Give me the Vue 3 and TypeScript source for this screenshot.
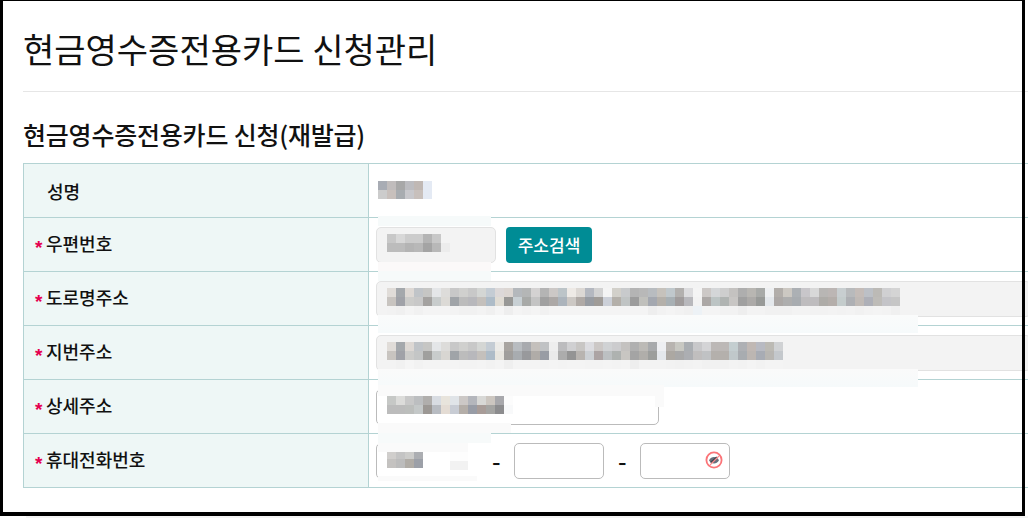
<script setup lang="ts">
type Mos = string[][];
const parse = (rows: string[]): Mos => rows.map((r) => r.split(" "));
const color = (c: string): string => (c.length === 2 ? `#${c}${c}${c}` : `#${c}`);

const nameMos = parse([
  "a8acb4 c0bcbc a8a8a8 bcbcc0 c0b8b4 e4eaf4",
  "cccccc c8c0bc a8acb0 c8c8cc c8c0bc e4eaf4",
]);
const zipMos = parse([
  "c8 d8 cc cc b4 c8",
  "bc bc b4 b8 a4 b8 ec",
]);
const roadMos = parse([
  "e0dcd8 a4a8ac ddd8d4 c0c4c8 c6c6c4 e4e6e8 dddcda c8c8c8 d0d0ce c8c8c8 d4d6d4 c4ccd4 dcd8d8 dcd6d2 b4b8bc b4b6b6 d4d2d2 b4b4b4 ccc8c6 bcc4c8 eeeae6 dcd8d4 b4b8c0 d2d2d2 f4f4f4 d2d0ca c8cacc b4b4b4 b8b8b8 b8bcc0 c6c2bc c0c8cc b2b0ae dcdcde f4f4f4 ccc8c6 d4d6d8 cecece c4c2c0 aeaeae b8b6b2 a8aaa8 eef0f2 b2aeaa ccc8c2 acb0b4 c8c6ca d8d8d8 b8b6b4 bcb6b4 c8ced0 b8babc c4bcb8 bcc0c6 bcbab6 d0d0d2 d4d4d4",
  "c8c4c0 a0a2a8 ccccca c8c8c8 a4a2a0 c8cccc dcdad6 a0a4a8 bcbcbc b8b8bc c4c0bc aebcc8 e0dcd4 989896 c8d0d4 a8aaa8 c4c4c4 a0a0a0 aca8a6 acb4bc ccc8c4 b0aaa6 989ca2 a09c98 ccd0d8 b4b0aa c0c4c4 9c9c9c c0c0bc a4a8b0 b4b0aa a8b0b4 a09c9c b8b8bc f2f2f2 aca8a6 bcc4c4 b0b4b2 c8c6c4 a0a0a0 acaaa8 989a98 e4e8ec aca8a6 aeaeae a8acb0 bebcbe bebcbe aeaca8 b4aeaa c4cccc aeb0b4 c0bab6 aeb0b8 bebcb8 c4c4c8 c6c6c6",
  "f2 f0 f4 f1 f4 f4 f4 f3 f1 f1 f3 f0 f5 ee f4 f2 f4 f1 f4 f4 f4 f4 f4 f4 f4 f4 f4 f4 f4 ee f2 f4 f2 f0 edf2f6 f4 f4 f2 f2 ee f3 f3 f1 f1 f1 f3 f3 f2 f2 f3 f2 f3 f1 f3 f4 f3 f0",
]);
const lotMos = parse([
  "e0dcd8 a4a8ac ddd8d4 c0c4c8 c6c6c4 e4e6e8 dddcda c8c8c8 d0d0ce c8c8c8 d4d6d4 c4ccd4 ecebe8 a8a4a0 b8bcc0 a8aaae c4c0bc c0c2c4 eeeeee bcbcbe d0d0d2 c8c6c4 dcdce0 ccc8c6 d0d2d4 ccccce c4c2c0 b0b0b0 bcbab6 a8aaac eeeff2 b8b4b0 c8c8c2 aaaeb2 c8c8ca d4d4d6 bcb8b6 bcb8b6 c4ced0 aeb0b4 c0b8b4 b8bac2 bcbab4 d0d2d4",
  "c8c4c0 a0a2a8 ccccca c4c6c6 a0a09e c8cccc d8d6d2 a0a4a8 bcbcbc b8b8bc c4c0bc aebcc8 e8e6e0 a09e9c a8acb0 98999c b0aca8 989ca4 eaeaea acacac 949494 b8b4b0 ccd0d4 aca4a4 bcc0c2 aeb2b0 c8c6c2 a4a4a4 b0aeaa 9c9e9c e4e8ec aca8a2 a8a8a8 acaeb2 c0bebe c0c2c4 b4b0ac b4b0ac c0c8ca a8acb0 bcb6b2 a8acb4 b8b6b2 c4c8cc",
  "f3 f1 f5 f2 f4 f4 f4 f4 f3 f3 f4 f2 f4 ef f4 f4 f4 f3 f4 f3 f4 f4 f3 f3 f4 f3 f4 ee f3 f3 f3 f2 f1 f2 f3 f1 f1 f1 f3 f2 f4 f2 f4 f4",
]);
const detailMos = parse([
  "c6c8c6 dcdcda c8c8c8 bcbec0 b0aeac d8dce2 e8e4dc e0e4e8 ccc8c6 b4b6bc d8d8d6 ccc6c0 a8a8ac fcfcfc",
  "bcbcbc bcbcbc bcbebc c4c8c8 9c9894 b8bcc2 e4dcd4 c8ccd4 b4aea8 989ca6 a89c98 a4a4a2 8c8c8e f8f9fa",
]);
const phoneMos = parse([
  "d0cecc c4c4c4 ccccca acaeb2",
  "c4c2c0 bcbcbc b0aca6 9ca0a8",
]);
</script>

<template>
  <div class="page">
    <header class="head">
      <h1 class="title">현금영수증전용카드 신청관리</h1>
    </header>
    <h2 class="sub">현금영수증전용카드 신청(재발급)</h2>

    <table class="form">
      <tbody>
        <tr>
          <th><span class="plain">성명</span></th>
          <td>
            <div class="mosaic name-m">
              <div v-for="(r, i) in nameMos" :key="i" class="mrow">
                <i v-for="(c, j) in r" :key="j" :style="{ background: color(c) }"></i>
              </div>
            </div>
          </td>
        </tr>
        <tr>
          <th><span class="req">*</span>우편번호</th>
          <td>
            <div class="line">
              <div class="field ro zip">
                <div class="mosaic">
                  <div v-for="(r, i) in zipMos" :key="i" class="mrow">
                    <i v-for="(c, j) in r" :key="j" :style="{ background: color(c) }"></i>
                  </div>
                </div>
              </div>
              <button class="btn" type="button">주소검색</button>
            </div>
          </td>
        </tr>
        <tr>
          <th><span class="req">*</span>도로명주소</th>
          <td>
            <div class="field ro wide">
              <div class="mosaic">
                <div v-for="(r, i) in roadMos" :key="i" class="mrow">
                  <i v-for="(c, j) in r" :key="j" :style="{ background: color(c) }"></i>
                </div>
              </div>
            </div>
          </td>
        </tr>
        <tr>
          <th><span class="req">*</span>지번주소</th>
          <td>
            <div class="field ro wide">
              <div class="mosaic">
                <div v-for="(r, i) in lotMos" :key="i" class="mrow">
                  <i v-for="(c, j) in r" :key="j" :style="{ background: color(c) }"></i>
                </div>
              </div>
            </div>
          </td>
        </tr>
        <tr>
          <th><span class="req">*</span>상세주소</th>
          <td>
            <div class="field detail">
              <div class="mosaic">
                <div v-for="(r, i) in detailMos" :key="i" class="mrow">
                  <i v-for="(c, j) in r" :key="j" :style="{ background: color(c) }"></i>
                </div>
              </div>
            </div>
          </td>
        </tr>
        <tr>
          <th><span class="req">*</span>휴대전화번호</th>
          <td>
            <div class="line phone">
              <div class="field ph1">
                <div class="mosaic">
                  <div v-for="(r, i) in phoneMos" :key="i" class="mrow">
                    <i v-for="(c, j) in r" :key="j" :style="{ background: color(c) }"></i>
                  </div>
                </div>
              </div>
              <span class="dash">-</span>
              <div class="field ph2"></div>
              <span class="dash">-</span>
              <div class="field ph2 eye-host">
                <svg class="eye" width="18" height="18" viewBox="0 0 18 18" aria-hidden="true">
                  <circle cx="9" cy="9" r="7.6" fill="#fff" stroke="#fb7478" stroke-width="1.8" />
                  <path d="M4 9.2C5.3 7.1 7 6 9 6s3.7 1.1 5 3.2c-1.3 2.1-3 3.2-5 3.2s-3.7-1.1-5-3.2Z" fill="#66707c" />
                  <path d="M5.6 11.6 11.8 6" stroke="#3c444e" stroke-width="1.4" />
                  <path d="M5 14 14 5" stroke="#fb8a8c" stroke-width="1.1" />
                </svg>
              </div>
            </div>
          </td>
        </tr>
      </tbody>
    </table>

    <!-- smudges left by the blur over the original capture -->
    <div class="smudge s1"></div>
    <div class="smudge s1b"></div>
    <div class="smudge s2"></div>
    <div class="smudge s3"></div>
    <div class="smudge s4"></div>
    <div class="smudge s4b"></div>
    <div class="smudge s5"></div>
    <div class="smudge s6"></div>
    <div class="smudge s7"></div>
    <div class="smudge s8"></div>
    <div class="smudge s9"></div>
    <div class="smudge s10"></div>

    <div class="frame"></div>
    <div class="under"></div>
  </div>
</template>

<style>
html,
body {
  margin: 0;
  overflow: hidden;
  background: #fff;
}
</style>

<style scoped>
.page {
  position: relative;
  width: 1028px;
  height: 518px;
  overflow: hidden;
  background: #fff;
  box-sizing: border-box;
  padding: 1px 0 0 23px;
  font-family: "Noto Sans CJK KR", "Noto Sans", sans-serif;
  color: #111;
}
.head {
  height: 90px;
  border-bottom: 1px solid #e6e6e6;
}
.title {
  margin: 0;
  padding-top: 23px;
  font-size: 34px;
  line-height: 50px;
  font-weight: 400;
}
.sub {
  margin: 25px 0 0;
  font-size: 25px;
  line-height: 34px;
  font-weight: 500;
  letter-spacing: -0.2px;
  height: 46px;
}
.form {
  border-collapse: collapse;
  table-layout: fixed;
  width: 1020px;
}
.form th,
.form td {
  border: 1px solid #b4d3d3;
  height: 53px;
  padding: 0;
}
.form th {
  width: 344px;
  background: #eef7f6;
  text-align: left;
  font-size: 18px;
  font-weight: 500;
  white-space: nowrap;
  line-height: 24px;
}
.form td {
  background: #fff;
  padding-left: 7px;
}
.plain {
  padding-left: 23px;
}
.req {
  display: inline-block;
  width: 11px;
  margin-left: 11px;
  color: #e5004f;
  font-family: "Liberation Sans", sans-serif;
  font-size: 19px;
  font-weight: 700;
  line-height: 20px;
  vertical-align: -3px;
}
.line {
  display: flex;
  align-items: center;
}
.field {
  box-sizing: border-box;
  height: 36px;
  border: 1px solid #bbb;
  border-radius: 5px;
  background: #fff;
  padding: 6px 0 0 10px;
  flex: none;
}
.ro {
  background: #f3f3f3;
  border-color: #e2e2e2;
}
.zip {
  width: 120px;
  margin-right: 10px;
}
.wide {
  width: 655px;
}
.detail {
  width: 283px;
}
.ph1 {
  width: 102px;
}
.ph2 {
  width: 90px;
}
.eye-host {
  position: relative;
}
.eye {
  position: absolute;
  left: 64px;
  top: 7px;
}
.dash {
  width: 8px;
  margin: 0 14px;
  font-size: 24px;
  font-weight: 500;
  line-height: 32px;
  text-align: center;
  color: #111;
}
.btn {
  box-sizing: border-box;
  width: 86px;
  height: 36px;
  padding: 0;
  border: 0;
  border-radius: 4px;
  background: #008c95;
  color: #fff;
  font-family: inherit;
  font-size: 17px;
  font-weight: 500;
  line-height: 36px;
}
.mosaic {
  display: flex;
  flex-direction: column;
}
.name-m {
  margin-left: 2px;
  margin-top: -1px;
}
.mrow {
  display: flex;
  height: 9px;
}
.mrow i {
  display: block;
  width: 9px;
  height: 9px;
  flex: none;
}
.smudge {
  position: absolute;
  left: 378px;
}
.s1 {
  top: 216px;
  width: 113px;
  height: 10px;
  background: #f6fafa;
}
.s1b {
  top: 262px;
  width: 113px;
  height: 19px;
  background: linear-gradient(#fbf9f9 45%, #f6fafa 45%);
}
.s2 {
  top: 315px;
  width: 540px;
  height: 18px;
  background: linear-gradient(#fafbfb, #f6fafb);
}
.s3 {
  top: 369px;
  width: 540px;
  height: 18px;
  background: linear-gradient(#fafafa, #f6fafb);
}
.s4 {
  top: 385px;
  width: 286px;
  height: 11px;
  background: #fafafa;
}
.s4b {
  top: 396px;
  left: 655px;
  width: 9px;
  height: 11px;
  background: #fafafa;
}
.s5 {
  top: 423px;
  width: 133px;
  height: 10px;
  background: #fafafa;
}
.s6 {
  top: 433px;
  width: 113px;
  height: 10px;
  background: #f7fafa;
}
.s7 {
  top: 443px;
  width: 107px;
  height: 9px;
  background: #fafafa;
}
.s8 {
  top: 452px;
  left: 450px;
  width: 18px;
  height: 18px;
  background: linear-gradient(#fdfdfd 50%, #f2f2f2 50%);
}
.s9 {
  top: 443px;
  left: 468px;
  width: 22px;
  height: 36px;
  background: #fff;
}
.s10 {
  top: 476px;
  width: 99px;
  height: 5px;
  background: #fafafa;
}
.frame {
  position: absolute;
  left: 0;
  top: 0;
  width: 1025px;
  height: 516px;
  box-sizing: border-box;
  border-style: solid;
  border-color: #000;
  border-width: 1px 3px 4px 3px;
  pointer-events: none;
}
.under {
  position: absolute;
  left: 26px;
  top: 516px;
  width: 1002px;
  height: 2px;
  background: #f4f4f4;
}
</style>
